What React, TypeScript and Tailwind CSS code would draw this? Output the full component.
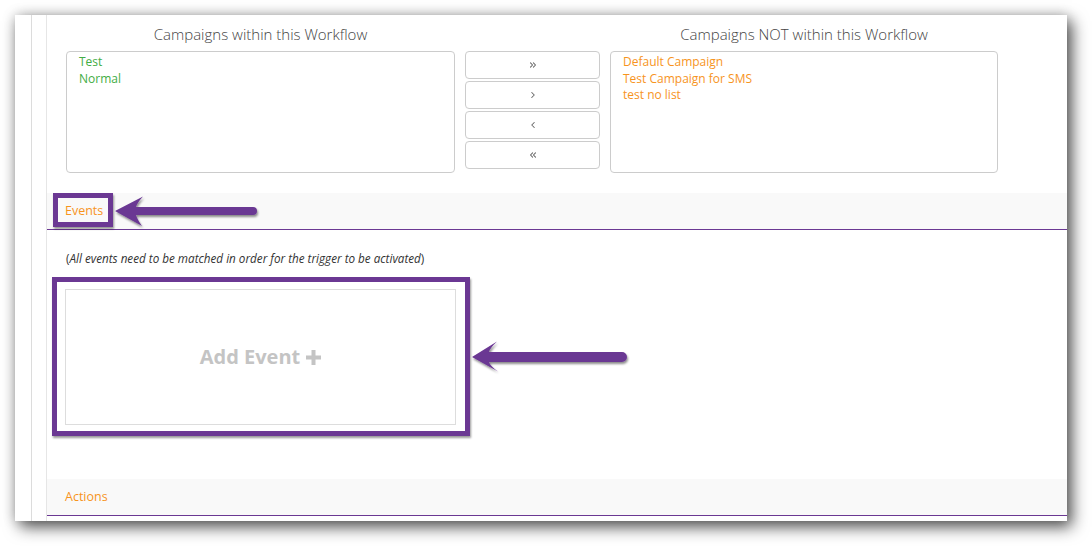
import { ChevronsRight, ChevronRight, ChevronLeft, ChevronsLeft } from 'lucide-react';

const PURPLE = '#6b3893';

function MoveButton({ children }: { children: React.ReactNode }) {
  return (
    <div className="h-[28px] rounded-[4px] border border-[#cccccc] bg-white flex items-center justify-center text-[#666]">
      {children}
    </div>
  );
}

export default function App() {
  return (
    <div className="relative w-[1092px] h-[546px] bg-white pl-[15px] pt-[15px] overflow-hidden font-['Open_Sans',sans-serif]">
      <div className="flex w-[1052px] h-[506px] bg-white shadow-[5px_6px_15px_rgba(0,0,0,0.65),0_0_12px_rgba(0,0,0,0.2)]">
        <div className="w-[17px] border-r border-[#dcdcdc]" />
        <div className="w-[15px] border-r border-[#e6e6e6]" />
        <div className="flex-1 flex flex-col">
          <div className="pt-[9px] pl-[19px]">
            <div className="grid grid-cols-[389px_135px_388px] gap-x-[10px]">
              <div className="h-[20px] leading-[20px] text-[15px] font-light text-[#444] text-center">
                Campaigns within this Workflow
              </div>
              <div />
              <div className="h-[20px] leading-[20px] text-[15px] font-light text-[#444] text-center">
                Campaigns NOT within this Workflow
              </div>
              <div className="mt-[7px] h-[122px] rounded-[4px] border border-[#cccccc] pl-[12px] pt-[2px] text-[12px] leading-[16.5px] text-[#42ad44]">
                <div>Test</div>
                <div>Normal</div>
              </div>
              <div className="mt-[7px] flex flex-col gap-[2px]">
                <MoveButton>
                  <ChevronsRight size={10} strokeWidth={2.5} />
                </MoveButton>
                <MoveButton>
                  <ChevronRight size={10} strokeWidth={2.5} />
                </MoveButton>
                <MoveButton>
                  <ChevronLeft size={10} strokeWidth={2.5} />
                </MoveButton>
                <MoveButton>
                  <ChevronsLeft size={10} strokeWidth={2.5} />
                </MoveButton>
              </div>
              <div className="mt-[7px] h-[122px] rounded-[4px] border border-[#cccccc] pl-[12px] pt-[2px] text-[12px] leading-[16.5px] text-[#f7941d]">
                <div>Default Campaign</div>
                <div>Test Campaign for SMS</div>
                <div>test no list</div>
              </div>
            </div>
          </div>

          <div className="relative mt-[20px] h-[37px] bg-[#f9f9f9] border-b border-[#6b3893] pl-[18px] flex items-center text-[12.5px] text-[#f7941d]">
            Events
            <div className="absolute left-[6px] top-0 w-[60px] h-[34px] border-[5px] border-[#6b3893] shadow-[1px_2px_2px_rgba(0,0,0,0.4)]" />
          </div>

          <div className="mt-[20px] pl-[19px] text-[11.7px] leading-[16px] text-[#333]">
            (<span className="italic">All events need to be matched in order for the trigger to be activated</span>)
          </div>

          <div className="relative mt-[23px] ml-[18px] w-[391px] h-[136px] border border-[#dddddd] flex items-center justify-center gap-[6px] text-[20px] font-bold text-[#c4c4c4]">
            <span>Add Event</span>
            <svg width="15" height="15" viewBox="0 0 15 15" className="mt-[1px]">
              <rect x="5.5" y="0" width="4" height="15" fill="#c4c4c4" />
              <rect x="0" y="5.5" width="15" height="4" fill="#c4c4c4" />
            </svg>
            <div className="absolute left-[-14px] top-[-13px] w-[418px] h-[159px] border-[5px] border-[#6b3893] shadow-[1px_2px_2px_rgba(0,0,0,0.4)]" />
          </div>

          <div className="mt-[54px] h-[37px] bg-[#f9f9f9] border-b border-[#6b3893] pl-[18px] flex items-center text-[12.5px] text-[#f7941d]">
            Actions
          </div>
        </div>
      </div>

      <svg className="absolute inset-0 pointer-events-none" width="1092" height="546" viewBox="0 0 1092 546">
        <defs>
          <filter id="sh" x="-10%" y="-50%" width="120%" height="200%">
            <feDropShadow dx="1" dy="2" stdDeviation="1.3" floodColor="#000" floodOpacity="0.45" />
          </filter>
        </defs>
        <path
          d="M115 211 L143 196.5 Q137 203 136 207 L253 207 A4 4 0 0 1 253 215 L136 215 Q137 219 142 226 Z"
          fill={PURPLE}
          filter="url(#sh)"
        />
        <path
          d="M472 357 L497 341.5 Q490 348 489 352 L622 352 A5 5 0 0 1 622 362 L489 362 Q490 366 498 371.5 Z"
          fill={PURPLE}
          filter="url(#sh)"
        />
      </svg>
    </div>
  );
}
